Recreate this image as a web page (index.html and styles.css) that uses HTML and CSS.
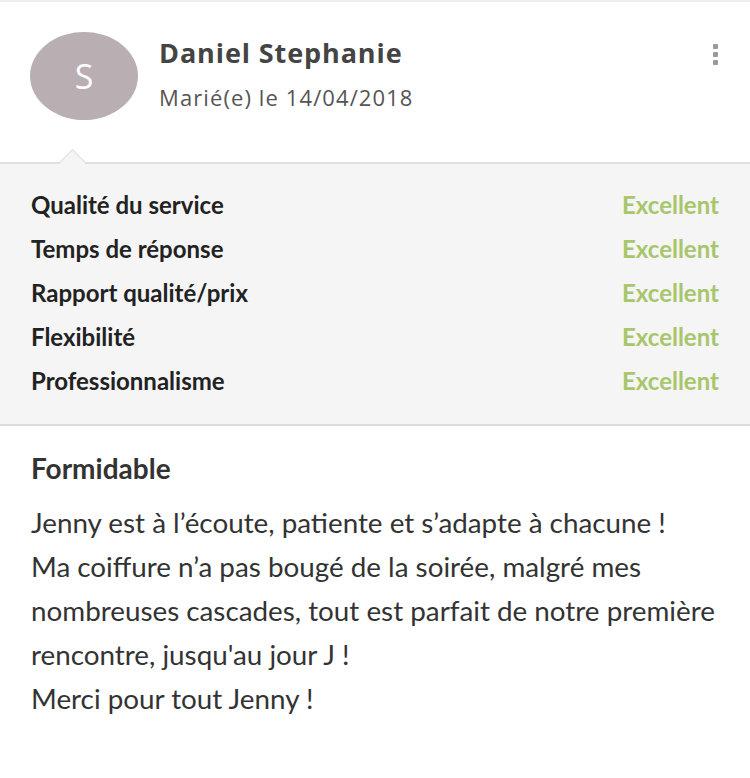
FILE: index.html
```html
<!DOCTYPE html>
<html lang="fr">
<head>
<meta charset="utf-8">
<title>Avis</title>
<link rel="stylesheet" href="styles.css">
</head>
<body>
<div class="card">
  <header class="head">
    <div class="avatar">S</div>
    <div class="who">
      <div class="name">Daniel Stephanie</div>
      <div class="date">Marié(e) le 14/04/2018</div>
    </div>
    <div class="menu" aria-label="menu"><span></span><span></span><span></span></div>
  </header>
  <section class="ratings">
    <div class="row"><span class="label">Qualité du service</span><span class="val">Excellent</span></div>
    <div class="row"><span class="label">Temps de réponse</span><span class="val">Excellent</span></div>
    <div class="row"><span class="label">Rapport qualité/prix</span><span class="val">Excellent</span></div>
    <div class="row"><span class="label">Flexibilité</span><span class="val">Excellent</span></div>
    <div class="row"><span class="label">Professionnalisme</span><span class="val">Excellent</span></div>
  </section>
  <section class="review">
    <h2 class="title">Formidable</h2>
    <p class="text">Jenny est à l’écoute, patiente et s’adapte à chacune !<br>Ma coiffure n’a pas bougé de la soirée, malgré mes nombreuses cascades, tout est parfait de notre première rencontre, jusqu'au jour J !<br>Merci pour tout Jenny !</p>
  </section>
</div>
</body>
</html>
```

FILE: styles.css
```css
html, body {
  margin: 0;
  padding: 0;
  background: #ffffff;
}
.card {
  border-top: 2px solid #eeeeee;
  font-family: Lato, "Open Sans", sans-serif;
}
.head {
  display: flex;
  align-items: flex-start;
  padding: 30px 32px 42px 30px;
}
.avatar {
  width: 108px;
  height: 88px;
  border-radius: 50%;
  background: #b9afb2;
  color: #ffffff;
  font-family: "Open Sans", sans-serif;
  font-size: 34px;
  display: flex;
  align-items: center;
  justify-content: center;
  flex: none;
}
.who {
  margin-left: 21px;
  padding-top: 4px;
  flex: 1;
}
.name {
  font-family: "Open Sans", sans-serif;
  font-weight: 700;
  font-size: 27px;
  letter-spacing: 0.9px;
  line-height: 34px;
  color: #444444;
}
.date {
  margin-top: 13px;
  font-family: "Open Sans", sans-serif;
  font-size: 22px;
  letter-spacing: 1.1px;
  line-height: 28px;
  color: #555555;
}
.menu {
  display: flex;
  flex-direction: column;
  gap: 3px;
  padding-top: 12px;
}
.menu span {
  width: 5px;
  height: 5px;
  border-radius: 1px;
  background: #9a9a9a;
}
.ratings {
  position: relative;
  background: #f5f5f5;
  border-top: 2px solid #e0e0e0;
  border-bottom: 2px solid #dddddd;
  padding: 19px 31px 21px 31px;
}
.ratings::before {
  content: "";
  position: absolute;
  left: 63px;
  top: -11px;
  width: 18px;
  height: 18px;
  background: #f5f5f5;
  border-top: 1px solid #e0e0e0;
  border-left: 1px solid #e0e0e0;
  transform: rotate(45deg);
}
.row {
  display: flex;
  justify-content: space-between;
  line-height: 44px;
  font-size: 24px;
  font-weight: 700;
}
.label {
  color: #222222;
}
.val {
  color: #a8c66c;
}
.review {
  padding: 20px 20px 20px 31px;
  color: #333333;
}
.title {
  margin: 0;
  font-size: 28px;
  font-weight: 700;
  line-height: 44px;
  color: #333333;
}
.text {
  margin: 11px 0 0 0;
  font-size: 27.8px;
  line-height: 44px;
  color: #333333;
}
```
